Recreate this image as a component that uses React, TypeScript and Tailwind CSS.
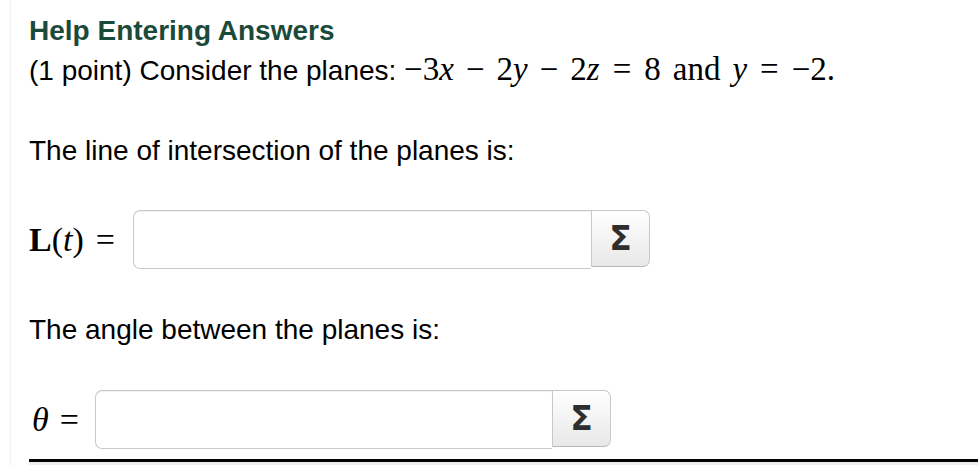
import React from "react";

const sans = { fontFamily: '"Liberation Sans", Arial, sans-serif' };
const serif = { fontFamily: '"Liberation Serif", "Times New Roman", serif' };

const AnswerBox = ({ width }: { width: string }) => {
  return (
    <div className={`flex h-[59px] ${width}`}>
      <div className="flex-1 rounded-l-[7px] border border-r-0 border-[#c8c8c8] bg-white shadow-[inset_0_1px_1px_rgba(0,0,0,0.06)]" />
      <div className="flex h-[57px] w-[59px] items-center justify-center rounded-r-[7px] border border-[#c8c8c8] border-b-[#b8b8b8] bg-gradient-to-b from-white to-[#e8e8e8]">
        <span
          className="text-[33px] font-bold leading-none text-[#2e2e2e]"
          style={{ fontFamily: '"DejaVu Sans", sans-serif' }}
        >
          Σ
        </span>
      </div>
    </div>
  );
};

const App = () => {
  return (
    <div className="h-[466px] w-[978px] overflow-hidden bg-white" style={sans}>
      <div className="ml-[10px] flex h-full flex-col border-l border-[#f1f1f1] pl-[18px]">
        <div className="pt-[15px] text-[28px] font-bold leading-[32px] text-[#1c4a3a]">
          Help Entering Answers
        </div>
        <div className="mt-[2px] whitespace-nowrap text-[28px] leading-[40px] text-black">
          (1 point) Consider the planes:{" "}
          <span className="text-[33px]" style={serif}>
            <span>−</span>
            <span>3</span>
            <span className="italic">x</span>
            <span className="mx-[12px]">−</span>
            <span>2</span>
            <span className="italic">y</span>
            <span className="mx-[12px]">−</span>
            <span>2</span>
            <span className="italic">z</span>
            <span className="mx-[13px]">=</span>
            <span>8</span>
            <span className="mx-[12px]">and</span>
            <span className="italic">y</span>
            <span className="mx-[13px]">=</span>
            <span>−2.</span>
          </span>
        </div>
        <div className="mt-[40px] text-[28px] leading-[40px] text-black">
          The line of intersection of the planes is:
        </div>
        <div className="mt-[39px] flex items-center">
          <span className="w-[104px] whitespace-nowrap text-[34px] text-black" style={serif}>
            <span className="font-bold">L</span>(<span className="italic">t</span>)
            <span className="ml-[12px]">=</span>
          </span>
          <AnswerBox width="w-[517px]" />
        </div>
        <div className="mt-[41px] text-[28px] leading-[40px] text-black">
          The angle between the planes is:
        </div>
        <div className="mt-[40px] flex items-center">
          <span className="w-[66px] whitespace-nowrap pl-[3px] text-[34px] text-black" style={serif}>
            <span className="italic">θ</span>
            <span className="ml-[11px]">=</span>
          </span>
          <AnswerBox width="w-[516px]" />
        </div>
        <div className="mt-[10px] h-[3px] w-full bg-black" />
        <div className="h-[3px] w-full bg-[#eeeeee]" />
      </div>
    </div>
  );
};

export default App;
